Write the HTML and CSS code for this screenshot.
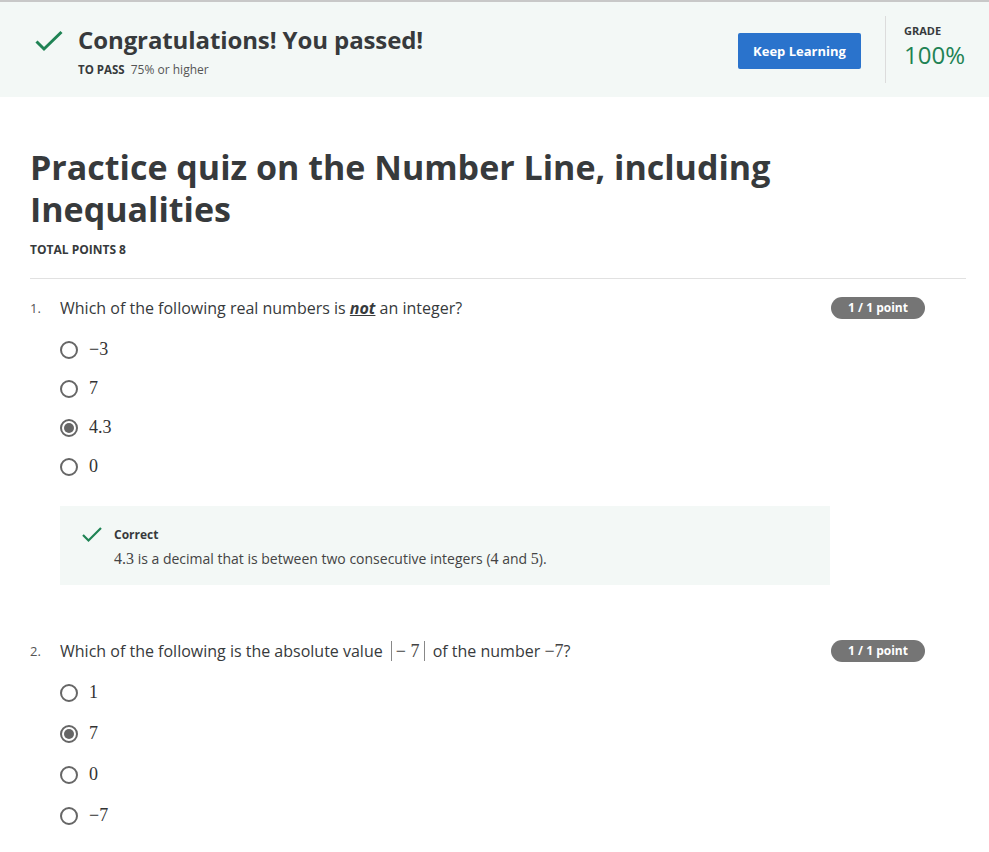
FILE: index.html
```html
<!DOCTYPE html>
<html>
<head>
<meta charset="utf-8">
<link rel="stylesheet" href="styles.css">
</head>
<body>
<header class="banner">
  <div class="banner-left">
    <svg class="pass-check" width="28" height="22" viewBox="0 0 28 22"><path d="M1.5 11.5 L9 19 L26.5 2" fill="none" stroke="#1f8354" stroke-width="3"/></svg>
    <div class="banner-text">
      <h2 class="passed">Congratulations! You passed!</h2>
      <div class="to-pass"><span class="to-pass-label">TO PASS</span> 75% or higher</div>
    </div>
  </div>
  <div class="banner-right">
    <button class="keep-btn">Keep Learning</button>
    <div class="divider"></div>
    <div class="grade">
      <div class="grade-label">GRADE</div>
      <div class="grade-value">100%</div>
    </div>
  </div>
</header>

<main class="content">
  <h1 class="quiz-title">Practice quiz on the Number Line, including Inequalities</h1>
  <div class="total-points">TOTAL POINTS 8</div>
  <hr class="rule">

  <section class="question">
    <div class="q-head">
      <span class="q-num">1.</span>
      <span class="q-text">Which of the following real numbers is <strong><em><u>not</u></em></strong> an integer?</span>
      <span class="badge">1 / 1 point</span>
    </div>
    <ul class="options">
      <li><span class="radio"></span><span class="math">−3</span></li>
      <li><span class="radio"></span><span class="math">7</span></li>
      <li><span class="radio checked"></span><span class="math">4.3</span></li>
      <li><span class="radio"></span><span class="math">0</span></li>
    </ul>
    <div class="feedback">
      <svg class="fb-check" width="20" height="16" viewBox="0 0 20 16"><path d="M1 8 L6.5 13.5 L19 1" fill="none" stroke="#1f8354" stroke-width="2.2"/></svg>
      <div class="fb-body">
        <div class="fb-title">Correct</div>
        <div class="fb-text"><span class="math">4.3</span> is a decimal that is between two consecutive integers (<span class="math">4</span> and <span class="math">5</span>).</div>
      </div>
    </div>
  </section>

  <section class="question q2">
    <div class="q-head">
      <span class="q-num">2.</span>
      <span class="q-text">Which of the following is the absolute value <span class="math abs"><span class="bar"></span>− 7<span class="bar"></span></span> of the number <span class="math">−7</span>?</span>
      <span class="badge">1 / 1 point</span>
    </div>
    <ul class="options">
      <li><span class="radio"></span><span class="math">1</span></li>
      <li><span class="radio checked"></span><span class="math">7</span></li>
      <li><span class="radio"></span><span class="math">0</span></li>
      <li><span class="radio"></span><span class="math">−7</span></li>
    </ul>
  </section>
</main>
</body>
</html>
```

FILE: styles.css
```css
* { box-sizing: border-box; }
body {
  margin: 0;
  font-family: "Open Sans", "Liberation Sans", sans-serif;
  color: #373a3c;
  background: #fff;
}
.banner {
  display: flex;
  justify-content: space-between;
  align-items: center;
  height: 97px;
  background: #f3f8f6;
  border-top: 2px solid #c8c8c8;
  padding: 0 24px 0 35px;
}
.banner-left {
  display: flex;
  align-items: flex-start;
  gap: 15px;
  margin-top: 2px;
}
.pass-check { margin-top: 6px; }
.passed {
  margin: 0;
  font-size: 24px;
  font-weight: 700;
  line-height: 32px;
  color: #373a3c;
  letter-spacing: -0.1px;
}
.to-pass {
  margin-top: 5px;
  font-size: 12px;
  color: #555;
}
.to-pass-label {
  font-weight: 700;
  font-size: 11.5px;
  color: #373a3c;
  margin-right: 3px;
}
.banner-right {
  display: flex;
  align-items: center;
  height: 100%;
}
.keep-btn {
  width: 123px;
  height: 36px;
  background: #2a73cc;
  color: #fff;
  border: none;
  border-radius: 2px;
  font-family: inherit;
  font-weight: 700;
  font-size: 13px;
  margin-top: 2px;
}
.divider {
  width: 1px;
  height: 67px;
  background: #dcdcdc;
  margin: 0 18px 0 24px;
}
.grade { margin-top: -8px; }
.grade-label {
  font-size: 11px;
  font-weight: 700;
  line-height: 16px;
  color: #373a3c;
}
.grade-value {
  margin-top: 2px;
  font-size: 24px;
  color: #1f8354;
  line-height: 28px;
}
.content {
  padding: 49px 23px 0 30px;
}
.quiz-title {
  margin: 0;
  font-size: 34px;
  font-weight: 700;
  line-height: 42px;
  max-width: 760px;
  color: #373a3c;
}
.total-points {
  margin-top: 11px;
  font-size: 12px;
  font-weight: 700;
}
.rule {
  border: 0;
  border-top: 1px solid #e1e1e1;
  margin: 20px 0 0;
}
.question { margin-top: 18px; }
.q2 { margin-top: 55px; }
.q-head {
  display: flex;
  align-items: center;
  padding-right: 41px;
}
.q-num {
  width: 30px;
  font-size: 13px;
  color: #555;
}
.q-text {
  flex: 1;
  font-size: 16px;
  color: #373a3c;
}
.q-text u { text-decoration-thickness: 1px; }
.badge {
  width: 94px;
  height: 22px;
  line-height: 22px;
  text-align: center;
  background: #757575;
  color: #fff;
  border-radius: 11px;
  font-size: 12px;
  font-weight: 700;
}
.math {
  font-family: "Liberation Serif", "DejaVu Serif", serif;
  font-size: 18px;
}
.q-text .math { font-size: 18px; color: #444; }
.abs .bar {
  display: inline-block;
  width: 1px;
  height: 20px;
  background: #888;
  vertical-align: -4px;
  margin: 0 4px;
}
.options {
  list-style: none;
  margin: 11px 0 0;
  padding: 0 0 0 30px;
}
.options li {
  display: flex;
  align-items: center;
  height: 39px;
  color: #333;
}
.q2 .options li { height: 41px; }
.q2 .options { margin-top: 10px; }
.radio {
  width: 18px;
  height: 18px;
  border: 2px solid #666;
  border-radius: 50%;
  margin-right: 11px;
  display: flex;
  align-items: center;
  justify-content: center;
}
.radio.checked::after {
  content: "";
  width: 10px;
  height: 10px;
  border-radius: 50%;
  background: #666;
}
.feedback {
  display: flex;
  margin: 20px 0 0 30px;
  width: 770px;
  height: 79px;
  background: #f3f8f6;
  padding: 20px 0 0 22px;
}
.fb-check { margin-top: 1px; }
.fb-body { margin-left: 12px; }
.fb-title {
  font-size: 12px;
  font-weight: 700;
  color: #373a3c;
}
.fb-text {
  margin-top: 6px;
  font-size: 14px;
  color: #444;
}
.fb-text .math { font-size: 16px; }
```
